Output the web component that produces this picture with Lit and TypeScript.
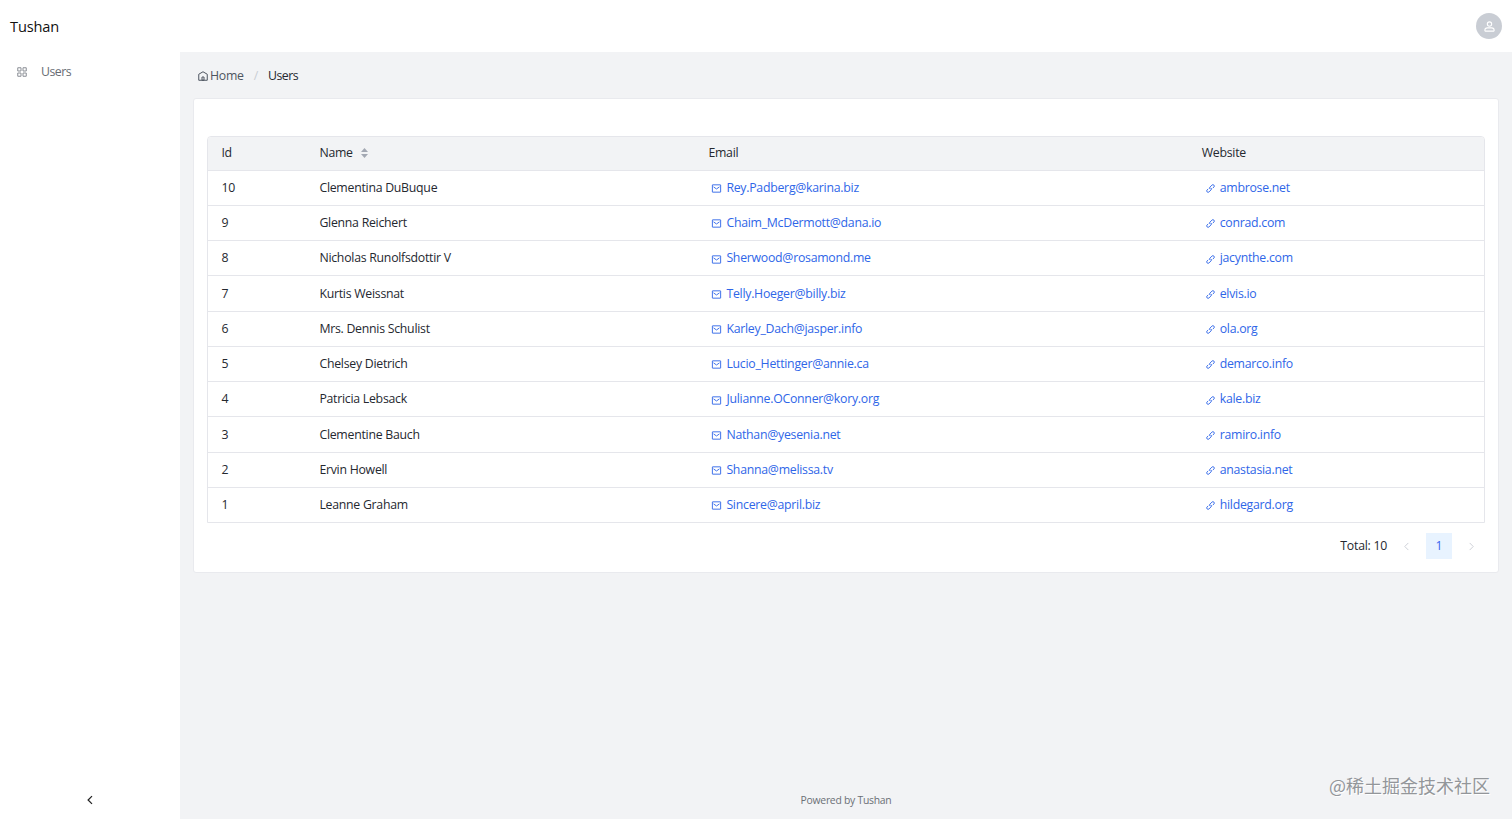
import { LitElement, html, css, svg } from "lit";
import { customElement } from "lit/decorators.js";

interface User {
  id: number;
  name: string;
  email: string;
  website: string;
}

const users: User[] = [
  { id: 10, name: "Clementina DuBuque", email: "Rey.Padberg@karina.biz", website: "ambrose.net" },
  { id: 9, name: "Glenna Reichert", email: "Chaim_McDermott@dana.io", website: "conrad.com" },
  { id: 8, name: "Nicholas Runolfsdottir V", email: "Sherwood@rosamond.me", website: "jacynthe.com" },
  { id: 7, name: "Kurtis Weissnat", email: "Telly.Hoeger@billy.biz", website: "elvis.io" },
  { id: 6, name: "Mrs. Dennis Schulist", email: "Karley_Dach@jasper.info", website: "ola.org" },
  { id: 5, name: "Chelsey Dietrich", email: "Lucio_Hettinger@annie.ca", website: "demarco.info" },
  { id: 4, name: "Patricia Lebsack", email: "Julianne.OConner@kory.org", website: "kale.biz" },
  { id: 3, name: "Clementine Bauch", email: "Nathan@yesenia.net", website: "ramiro.info" },
  { id: 2, name: "Ervin Howell", email: "Shanna@melissa.tv", website: "anastasia.net" },
  { id: 1, name: "Leanne Graham", email: "Sincere@april.biz", website: "hildegard.org" },
];

const shapes = {
  apps: svg`<path d="M7 7h13v13H7zM28 7h13v13H28zM7 28h13v13H7zM28 28h13v13H28z"/>`,
  home: svg`<path d="M7 17 24 7l17 10v24H7V17Z"/><path d="M20 28h8v13h-8V28Z"/>`,
  user: svg`<path d="M7 37c0-4.97 4.03-8 9-8h16c4.97 0 9 3.03 9 8v3a1 1 0 0 1-1 1H8a1 1 0 0 1-1-1v-3Z"/><circle cx="24" cy="15" r="8"/>`,
  email: svg`<rect x="6" y="8" width="36" height="32" rx="1"/><path d="m37 17-12.43 8.606a1 1 0 0 1-1.14 0L11 17"/>`,
  chain: svg`<path d="m14.1 25.414-4.95 4.95a6 6 0 0 0 8.486 8.485l8.485-8.485a6 6 0 0 0 0-8.485m7.779.707 4.95-4.95a6 6 0 1 0-8.486-8.485l-8.485 8.485a6 6 0 0 0 0 8.485"/>`,
  left: svg`<path d="M32 8.4 16.444 23.956 32 39.513"/>`,
  right: svg`<path d="m16 39.513 15.556-15.557L16 8.4"/>`,
};

const icon = (name: keyof typeof shapes) =>
  html`<svg class="icon ${name}" viewBox="0 0 48 48" fill="none" stroke="currentColor" stroke-width="4">${shapes[name]}</svg>`;

@customElement("app-root")
export class AppRoot extends LitElement {
  static styles = css`
    :host {
      display: grid;
      grid-template: 52px 1fr / 180px 1fr;
      height: 100vh;
      overflow: hidden;
      background: #fff;
      color: #25282f;
      font: 12.3px/20px "Open Sans", "Noto Sans", sans-serif;
      letter-spacing: -0.26px;
    }
    * { box-sizing: border-box; }
    .icon { display: block; flex: none; width: 11px; height: 11px; }
    .header {
      grid-column: 1 / 3;
      display: flex;
      align-items: center;
      justify-content: space-between;
      padding: 0 10px;
    }
    .brand { font-size: 14.6px; letter-spacing: -0.15px; color: #111; }
    .avatar {
      display: grid;
      place-items: center;
      width: 26px;
      height: 26px;
      border-radius: 50%;
      background: #c9cdd4;
      color: #fff;
    }
    .avatar .icon { width: 13px; height: 13px; }
    .sidebar {
      display: flex;
      flex-direction: column;
      justify-content: space-between;
    }
    .menu-item {
      display: flex;
      align-items: center;
      gap: 13px;
      padding: 10px 16px;
      color: #686c74;
      letter-spacing: -0.5px;
    }
    .menu-item .icon { width: 12px; height: 12px; color: #8b8f96; }
    .collapse { display: grid; place-items: center; height: 38px; color: #222; }
    .collapse .icon { width: 12px; height: 12px; stroke-width: 5; }
    .main {
      display: flex;
      flex-direction: column;
      padding: 0 13px;
      background: #f2f3f5;
    }
    .crumbs {
      display: flex;
      align-items: center;
      height: 46px;
      padding: 1px 0 0 3px;
      color: #4e5560;
    }
    .crumbs .icon { width: 12px; height: 12px; margin: 0 1px 0 1px; }
    .slash { margin: 0 10px; color: #c9cdd4; }
    .current { color: #25282f; letter-spacing: -0.5px; }
    .card {
      background: #fff;
      border: 1px solid #e9eaee;
      border-radius: 3px;
      height: 475px;
      padding: 37px 13px 0;
    }
    .table {
      border: 1px solid #e5e6eb;
      border-radius: 4px 4px 0 0;
      overflow: hidden;
    }
    .row {
      display: grid;
      grid-template-columns: 98px 389px 493.3px 1fr;
      align-items: center;
      height: 35.25px;
      padding: 0.5px 0 0 13.4px;
      border-bottom: 1px solid #e5e6eb;
    }
    .row:last-child { height: 34.25px; border-bottom: 0; }
    .row.head { height: 33.5px; padding-top: 0; background: #f2f3f5; }
    .sortable { display: flex; align-items: center; gap: 8px; }
    .sorter { width: 7px; height: 10px; fill: #a3a8b3; }
    .link {
      display: flex;
      align-items: center;
      gap: 4px;
      padding-left: 3px;
      color: #2f66e8;
    }
    .link .icon { margin-top: 1.5px; }
    .pager {
      display: flex;
      align-items: center;
      justify-content: flex-end;
      height: 26px;
      margin-top: 10px;
      color: #c9cdd4;
    }
    .total { color: #25282f; margin-right: 14px; }
    .page {
      display: grid;
      place-items: center;
      width: 26px;
      height: 26px;
      margin: 0 14px;
      background: #e8f3ff;
      color: #3a64f0;
    }
    .pager .right { margin-right: 8px; }
    .footer {
      margin-top: auto;
      height: 29px;
      text-align: center;
      font-size: 10.4px;
      color: #6b7075;
    }
    .watermark {
      position: absolute;
      right: 22px;
      bottom: 20px;
      font: 18px/27px "Noto Sans CJK SC", sans-serif;
      letter-spacing: 0;
      color: #93969a;
      text-shadow: 1px 1px 0 #fff;
    }
  `;

  render() {
    return html`
      <header class="header">
        <div class="brand">Tushan</div>
        <div class="avatar">${icon("user")}</div>
      </header>
      <aside class="sidebar">
        <div class="menu-item">${icon("apps")}<span>Users</span></div>
        <div class="collapse">${icon("left")}</div>
      </aside>
      <main class="main">
        <nav class="crumbs">
          ${icon("home")}<span>Home</span><span class="slash">/</span><span class="current">Users</span>
        </nav>
        <section class="card">
          <div class="table">
            <div class="row head">
              <span>Id</span>
              <span class="sortable">Name
                <svg class="sorter" viewBox="0 0 7 10"><path d="M3.5 0 7 4H0zM0 6h7l-3.5 4z"/></svg>
              </span>
              <span>Email</span>
              <span>Website</span>
            </div>
            ${users.map(
              (u) => html`<div class="row">
                <span>${u.id}</span>
                <span>${u.name}</span>
                <span class="link">${icon("email")}<span>${u.email}</span></span>
                <span class="link">${icon("chain")}<span>${u.website}</span></span>
              </div>`
            )}
          </div>
          <div class="pager">
            <span class="total">Total: 10</span>
            ${icon("left")}<span class="page">1</span>${icon("right")}
          </div>
        </section>
        <footer class="footer">Powered by Tushan</footer>
      </main>
      <div class="watermark">@稀土掘金技术社区</div>
    `;
  }
}
